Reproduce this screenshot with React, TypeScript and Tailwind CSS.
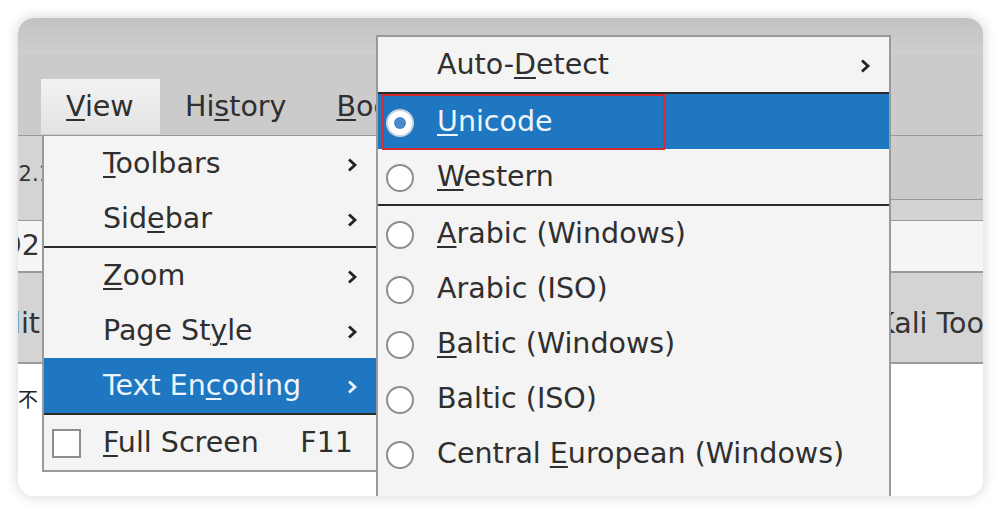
import React from "react";

type Item = {
  pre?: string;
  u?: string;
  post?: string;
  arrow?: boolean;
  active?: boolean;
  check?: boolean;
  shortcut?: string;
  radio?: boolean;
  selected?: boolean;
  marked?: boolean;
  sep?: boolean;
};

const Label = ({ pre = "", u = "", post = "" }: Item) => (
  <span className="whitespace-nowrap">
    {pre}
    {u && <span className="underline decoration-2 underline-offset-[3px]">{u}</span>}
    {post}
  </span>
);

const Chevron = ({ light }: { light?: boolean }) => (
  <svg
    width="12"
    height="16"
    viewBox="0 0 12 16"
    className={light ? "text-[#eef4fb]" : "text-[#222222]"}
  >
    <path d="M3 2.5 L9 8 L3 13.5" fill="none" stroke="currentColor" strokeWidth="2.8" />
  </svg>
);

const Radio = ({ selected }: { selected?: boolean }) => (
  <div
    className={
      selected
        ? "w-[28px] h-[28px] rounded-full bg-white border-2 border-[#c9d3dd] flex items-center justify-center"
        : "w-[28px] h-[28px] rounded-full bg-white border-2 border-[#8e8e8e]"
    }
  >
    {selected && <div className="w-[12px] h-[12px] rounded-full bg-[#4a87cc]" />}
  </div>
);

const mainItems: Item[] = [
  { u: "T", post: "oolbars", arrow: true },
  { pre: "Sid", u: "e", post: "bar", arrow: true },
  { sep: true },
  { u: "Z", post: "oom", arrow: true },
  { pre: "Page St", u: "y", post: "le", arrow: true },
  { pre: "Text En", u: "c", post: "oding", arrow: true, active: true },
  { sep: true },
  { u: "F", post: "ull Screen", check: true, shortcut: "F11" },
];

const subItems: Item[] = [
  { pre: "Auto-", u: "D", post: "etect", arrow: true },
  { sep: true },
  { u: "U", post: "nicode", radio: true, selected: true, active: true, marked: true },
  { u: "W", post: "estern", radio: true },
  { sep: true },
  { u: "A", post: "rabic (Windows)", radio: true },
  { pre: "Arabic (ISO)", radio: true },
  { u: "B", post: "altic (Windows)", radio: true },
  { pre: "Baltic (ISO)", radio: true },
  { pre: "Central ", u: "E", post: "uropean (Windows)", radio: true },
  { pre: "Central ", u: "E", post: "uropean (ISO)", radio: true },
];

function MainMenu() {
  return (
    <div className="absolute left-[24px] top-[118px] w-[335px] bg-[#f4f4f4] border-l-2 border-b-2 border-[#9a9a9a]">
      {mainItems.map((item, i) =>
        item.sep ? (
          <div key={i} className="h-[2px] bg-[#2b2b2b]" />
        ) : (
          <div
            key={i}
            className={
              item.active
                ? "h-[55px] pt-[2px] flex items-center bg-[#1e77c0] text-[#eef4fb]"
                : "h-[55px] pt-[2px] flex items-center text-[#2f2f2f]"
            }
          >
            <div className="w-[59px] shrink-0 pl-[8px]">
              {item.check && <div className="w-[29px] h-[29px] bg-white border-2 border-[#8e8e8e]" />}
            </div>
            <div className="flex-1">
              <Label {...item} />
            </div>
            {item.arrow && (
              <div className="pr-[19px]">
                <Chevron light={item.active} />
              </div>
            )}
            {item.shortcut && <div className="pr-[24px]">{item.shortcut}</div>}
          </div>
        )
      )}
    </div>
  );
}

function SubMenu() {
  return (
    <div className="absolute left-[358px] top-[17px] w-[515px] bg-[#f4f4f4] border-2 border-[#9a9a9a]">
      {subItems.map((item, i) =>
        item.sep ? (
          <div key={i} className="h-[2px] bg-[#2b2b2b]" />
        ) : (
          <div
            key={i}
            className={
              item.active
                ? "relative h-[55px] pt-[2px] flex items-center bg-[#1e77c0] text-[#eef4fb]"
                : "relative h-[55px] pt-[2px] flex items-center text-[#2f2f2f]"
            }
          >
            <div className="w-[59px] shrink-0 pl-[8px]">{item.radio && <Radio selected={item.selected} />}</div>
            <div className="flex-1">
              <Label {...item} />
            </div>
            {item.arrow && (
              <div className="pr-[18px]">
                <Chevron light={item.active} />
              </div>
            )}
            {item.marked && (
              <div className="absolute left-[4px] top-0 w-[283px] h-[56px] border-2 border-[#d42a30]" />
            )}
          </div>
        )
      )}
    </div>
  );
}

export default function App() {
  return (
    <div className="w-[1001px] h-[515px] bg-white pt-[18px] pl-[18px] font-['DejaVu_Sans',sans-serif] text-[28.5px] leading-none">
      <div className="relative w-[965px] h-[478px] rounded-[16px] overflow-hidden shadow-[0_0_14px_rgba(0,0,0,0.18)] flex flex-col bg-white">
        {/* title bar */}
        <div className="h-[36px] shrink-0 bg-gradient-to-b from-[#c2c2c2] to-[#cfcfcf]" />

        {/* menu bar */}
        <div className="h-[82px] shrink-0 bg-[#cbcbcb] border-b border-[#9a9a9a] flex items-end pl-[23px] pb-[1px] text-[#2f2f2f]">
          <div className="w-[119px] h-[55px] pl-[25px] pt-[2px] flex items-center bg-gradient-to-b from-[#f3f3f3] to-[#e3e3e3]">
            <Label u="V" post="iew" />
          </div>
          <div className="h-[55px] px-[25px] pt-[2px] flex items-center">
            <Label pre="Hi" u="s" post="tory" />
          </div>
          <div className="h-[55px] px-[25px] pt-[2px] flex items-center">
            <Label u="B" post="ookmarks" />
          </div>
        </div>

        {/* tab bar */}
        <div className="h-[85px] shrink-0 flex border-b border-[#9a9a9a] text-[#333333]">
          <div className="w-[300px] bg-[#d4d4d4] flex justify-end pt-[28px] text-[21px] pr-[266px]">
            <span className="whitespace-nowrap">192.168.2.1</span>
          </div>
          <div className="flex-1 flex flex-col">
            <div className="h-[64px] bg-[#cbcbcb] border-b border-[#9a9a9a]" />
            <div className="flex-1 bg-[#d3d3d3]" />
          </div>
        </div>

        {/* url bar */}
        <div className="h-[52px] shrink-0 bg-[#f5f5f5] border-b-2 border-[#9a9a9a] flex items-center text-[#333333]">
          <div className="w-[22px] flex justify-end">
            <span className="whitespace-nowrap">192</span>
          </div>
        </div>

        {/* bookmarks bar */}
        <div className="h-[91px] shrink-0 bg-[#d4d4d4] border-b-2 border-[#9a9a9a] flex items-center pt-[14px] text-[#333333]">
          <div className="w-[22px] flex justify-end">
            <span className="whitespace-nowrap">Edit</span>
          </div>
          <span className="ml-[836px] whitespace-nowrap">Kali Tools</span>
        </div>

        {/* page content */}
        <div className="flex-1 bg-white pt-[20px] text-[#222222]">
          <span className="text-[20px] font-['Noto_Sans_CJK_SC',sans-serif]">不</span>
        </div>

        <MainMenu />
        <SubMenu />
      </div>
    </div>
  );
}
